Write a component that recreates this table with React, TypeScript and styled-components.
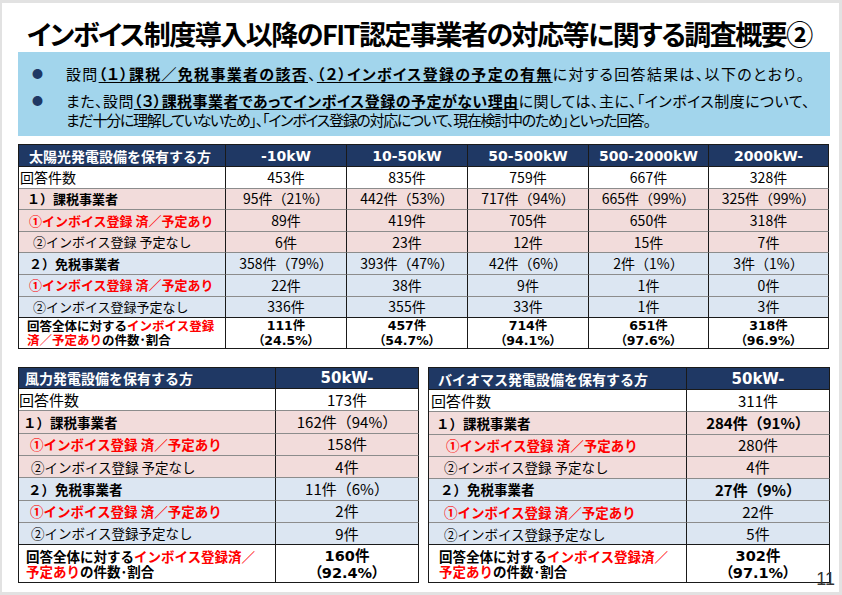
import React from "react";
import styled, { createGlobalStyle } from "styled-components";

const GlobalStyle = createGlobalStyle`
  html, body { margin: 0; padding: 0; background: #fff; }
  body { font-family: "Noto Sans CJK JP", "Noto Sans", sans-serif; color: #000; }
  * { box-sizing: border-box; }
`;

const Page = styled.div`
  position: relative;
  width: 842px;
  height: 595px;
  background: #fff;
  border-top: 3px solid #e2e2e2;
  border-left: 2px solid #e2e2e2;
  border-right: 3px solid #e2e2e2;
  border-bottom: 3px solid #e2e2e2;
  padding: 16px 0 0 16px;
  display: flex;
  flex-direction: column;
  overflow: hidden;
`;

const Title = styled.h1`
  margin: 0 0 0 9px;
  height: 30px;
  font-size: 27px;
  line-height: 30px;
  font-weight: 700;
  letter-spacing: -1.5px;
  font-feature-settings: "palt";
  white-space: nowrap;
  color: #000;
`;

const InfoBox = styled.div`
  width: 812px;
  height: 84px;
  margin-top: 3px;
  background: #a2d5ec;
  padding-top: 12px;
  display: flex;
  flex-direction: column;
  gap: 8px;
`;

const BulletItem = styled.div`
  display: grid;
  grid-template-columns: 48px 1fr;
  font-size: 15px;
  line-height: 19px;
  font-feature-settings: "palt";
  white-space: nowrap;
`;

const Bullet = styled.span`
  color: #1f3864;
  font-size: 11px;
  padding-left: 14px;
`;

const Lines = styled.div`
  display: flex;
  flex-direction: column;
`;

const Line = styled.span<{ $ls: number }>`
  display: block;
  letter-spacing: ${(p) => p.$ls}px;
`;

const Emph = styled.span`
  font-weight: 700;
  text-decoration: underline;
  text-underline-offset: 2px;
`;

const Table = styled.table<{ $w: number }>`
  width: ${(p) => p.$w}px;
  border-collapse: separate;
  border-spacing: 0;
  table-layout: fixed;
  border-top: 1px solid #1a1a1a;
  border-left: 1px solid #1a1a1a;
`;

const MainTable = styled(Table)`
  margin-top: 8px;
`;

const BottomRow = styled.div`
  display: flex;
  gap: 9px;
  margin-top: 18px;
`;

const HeadCell = styled.th<{ $left?: boolean; $pad?: number; $h: number; $size: number }>`
  background: #1f3864;
  color: #fff;
  height: ${(p) => p.$h}px;
  padding: 0 0 0 ${(p) => p.$pad ?? 0}px;
  font-weight: 700;
  font-size: ${(p) => p.$size}px;
  text-align: ${(p) => (p.$left ? "left" : "center")};
  font-family: ${(p) =>
    p.$left
      ? `"Noto Sans CJK JP", sans-serif`
      : `"DejaVu Sans", "Noto Sans CJK JP", sans-serif`};
  border-right: 1px solid #1a1a1a;
  border-bottom: 1px solid #1a1a1a;
  white-space: nowrap;
`;

type Tone = "white" | "pink" | "blue";
const toneBg: Record<Tone, string> = {
  white: "#ffffff",
  pink: "#f2dcdb",
  blue: "#dce6f2",
};

const Row = styled.tr<{ $tone: Tone }>`
  background: ${(p) => toneBg[p.$tone]};
`;

type Kind = "count" | "group" | "yes" | "no" | "total";

const LabelCell = styled.td<{ $pad: number; $kind: Kind; $size: number; $h: number; $dark?: boolean; $lh: number }>`
  height: ${(p) => p.$h}px;
  padding: 0 0 0 ${(p) => p.$pad}px;
  font-size: ${(p) => p.$size}px;
  font-weight: ${(p) => (p.$kind === "count" || p.$kind === "no" ? 400 : 700)};
  color: ${(p) => (p.$kind === "yes" ? "#ff0000" : "#000")};
  line-height: ${(p) => (p.$kind === "total" ? `${p.$lh}px` : "1.2")};
  white-space: nowrap;
  text-align: left;
  border-right: 1px solid #1a1a1a;
  border-bottom: 1px solid ${(p) => (p.$dark ? "#1a1a1a" : "#8c8c8c")};
`;

const ValueCell = styled.td<{ $size: number; $bold?: boolean; $h: number; $dark?: boolean; $lh?: number }>`
  height: ${(p) => p.$h}px;
  padding: 0;
  font-size: ${(p) => p.$size}px;
  font-weight: ${(p) => (p.$bold ? 700 : 400)};
  line-height: ${(p) => (p.$lh ? `${p.$lh}px` : "1.2")};
  text-align: center;
  white-space: nowrap;
  border-right: 1px solid #1a1a1a;
  border-bottom: 1px solid ${(p) => (p.$dark ? "#1a1a1a" : "#8c8c8c")};
`;

const TotalNum = styled.span`
  font-family: "DejaVu Sans", "Noto Sans CJK JP", sans-serif;
  font-feature-settings: "palt";
`;

const Red = styled.span`
  color: #ff0000;
`;

const PageNum = styled.div`
  position: absolute;
  right: 4px;
  bottom: 3px;
  font-family: "Liberation Sans", Arial, sans-serif;
  font-size: 18px;
  line-height: 20px;
  color: #333;
`;

type RowDef = {
  kind: Kind;
  tone: Tone;
  padKey: string;
  label: React.ReactNode;
  values: React.ReactNode[];
  boldValues?: boolean;
};

type Sizes = {
  head: number;
  headSize: number;
  colHeadSize: number;
  row: number;
  total: number;
  label: number;
  count: number;
  value: number;
  totalLabel: number;
  totalValue: number;
  totalLh: number;
  pads: Record<string, number>;
  headPad: number;
};

function DataTable({
  width,
  colWidths,
  title,
  cols,
  rows,
  sizes,
  main,
}: {
  width: number;
  colWidths: number[];
  title: string;
  cols: string[];
  rows: RowDef[];
  sizes: Sizes;
  main?: boolean;
}) {
  const T = main ? MainTable : Table;
  return (
    <T $w={width}>
      <colgroup>
        {colWidths.map((w, i) => (
          <col key={i} style={{ width: w }} />
        ))}
      </colgroup>
      <thead>
        <tr>
          <HeadCell $left $pad={sizes.headPad} $h={sizes.head} $size={sizes.headSize}>
            {title}
          </HeadCell>
          {cols.map((c) => (
            <HeadCell key={c} $h={sizes.head} $size={sizes.colHeadSize}>
              {c}
            </HeadCell>
          ))}
        </tr>
      </thead>
      <tbody>
        {rows.map((r, i) => {
          const isTotal = r.kind === "total";
          const beforeTotal = i === rows.length - 2;
          const h = isTotal ? sizes.total : sizes.row;
          return (
            <Row key={i} $tone={r.tone}>
              <LabelCell
                $pad={sizes.pads[r.padKey]}
                $kind={r.kind}
                $size={isTotal ? sizes.totalLabel : r.kind === "count" ? sizes.count : sizes.label}
                $h={h}
                $lh={sizes.totalLh}
                $dark={beforeTotal || isTotal}
              >
                {r.label}
              </LabelCell>
              {r.values.map((v, j) => (
                <ValueCell
                  key={j}
                  $size={isTotal ? sizes.totalValue : sizes.value}
                  $bold={isTotal || r.boldValues}
                  $h={h}
                  $dark={beforeTotal || isTotal}
                  $lh={isTotal ? sizes.totalLh : undefined}
                >
                  {v}
                </ValueCell>
              ))}
            </Row>
          );
        })}
      </tbody>
    </T>
  );
}

const total = (n: string, p: string) => (
  <TotalNum>
    {n}
    <br />
    {p}
  </TotalNum>
);

const mainRows: RowDef[] = [
  { kind: "count", tone: "white", padKey: "count", label: "回答件数", values: ["453件", "835件", "759件", "667件", "328件"] },
  { kind: "group", tone: "pink", padKey: "g1", label: "１）課税事業者", values: ["95件（21%）", "442件（53%）", "717件（94%）", "665件（99%）", "325件（99%）"] },
  { kind: "yes", tone: "pink", padKey: "yes1", label: "①インボイス登録 済／予定あり", values: ["89件", "419件", "705件", "650件", "318件"] },
  { kind: "no", tone: "pink", padKey: "no1", label: "②インボイス登録 予定なし", values: ["6件", "23件", "12件", "15件", "7件"] },
  { kind: "group", tone: "blue", padKey: "g2", label: "２）免税事業者", values: ["358件（79%）", "393件（47%）", "42件（6%）", "2件（1%）", "3件（1%）"] },
  { kind: "yes", tone: "blue", padKey: "yes2", label: "①インボイス登録 済／予定あり", values: ["22件", "38件", "9件", "1件", "0件"] },
  { kind: "no", tone: "blue", padKey: "no2", label: "②インボイス登録予定なし", values: ["336件", "355件", "33件", "1件", "3件"] },
  {
    kind: "total",
    tone: "white",
    padKey: "total",
    label: (
      <>
        回答全体に対する<Red>インボイス登録</Red>
        <br />
        <Red>済／予定あり</Red>の件数･割合
      </>
    ),
    values: [
      total("111件", "（24.5%）"),
      total("457件", "（54.7%）"),
      total("714件", "（94.1%）"),
      total("651件", "（97.6%）"),
      total("318件", "（96.9%）"),
    ],
  },
];

const smallRows = (v: string[], tot: React.ReactNode, boldGroups: boolean): RowDef[] => [
  { kind: "count", tone: "white", padKey: "count", label: "回答件数", values: [v[0]] },
  { kind: "group", tone: "pink", padKey: "g1", label: "１）課税事業者", values: [v[1]], boldValues: boldGroups },
  { kind: "yes", tone: "pink", padKey: "yes1", label: "①インボイス登録 済／予定あり", values: [v[2]] },
  { kind: "no", tone: "pink", padKey: "no1", label: "②インボイス登録 予定なし", values: [v[3]] },
  { kind: "group", tone: "blue", padKey: "g2", label: "２）免税事業者", values: [v[4]], boldValues: boldGroups },
  { kind: "yes", tone: "blue", padKey: "yes2", label: "①インボイス登録 済／予定あり", values: [v[5]] },
  { kind: "no", tone: "blue", padKey: "no2", label: "②インボイス登録予定なし", values: [v[6]] },
  {
    kind: "total",
    tone: "white",
    padKey: "total",
    label: (
      <>
        回答全体に対する<Red>インボイス登録済／</Red>
        <br />
        <Red>予定あり</Red>の件数･割合
      </>
    ),
    values: [tot],
  },
];

const mainSizes: Sizes = {
  head: 22,
  headSize: 14,
  colHeadSize: 14,
  row: 21.6,
  total: 29,
  label: 13,
  count: 14,
  value: 14,
  totalLabel: 12.5,
  totalValue: 12.5,
  totalLh: 14,
  headPad: 10,
  pads: { count: 1, g1: 8, yes1: 10, no1: 14, g2: 10, yes2: 10, no2: 14, total: 8 },
};

const windSizes: Sizes = {
  head: 21,
  headSize: 14,
  colHeadSize: 15,
  row: 22.2,
  total: 38,
  label: 13.5,
  count: 15,
  value: 15,
  totalLabel: 13.5,
  totalValue: 14.5,
  totalLh: 15,
  headPad: 6,
  pads: { count: 0, g1: 4, yes1: 11, no1: 12, g2: 9, yes2: 11, no2: 12, total: 7 },
};

const bioSizes: Sizes = {
  ...windSizes,
  head: 22,
  headPad: 9,
  pads: { count: 2, g1: 7, yes1: 17, no1: 15, g2: 11, yes2: 15, no2: 15, total: 10 },
};

export default function App() {
  return (
    <>
      <GlobalStyle />
      <Page>
        <Title>インボイス制度導入以降のFIT認定事業者の対応等に関する調査概要②</Title>
        <InfoBox>
          <BulletItem>
            <Bullet>●</Bullet>
            <Lines>
              <Line $ls={1.3}>
                設問<Emph>（１）課税／免税事業者の該否</Emph>、<Emph>（２）インボイス登録の予定の有無</Emph>
                に対する回答結果は、以下のとおり。
              </Line>
            </Lines>
          </BulletItem>
          <BulletItem>
            <Bullet>●</Bullet>
            <Lines>
              <Line $ls={0.45}>
                また、設問<Emph>（３）課税事業者であってインボイス登録の予定がない理由</Emph>
                に関しては、主に、「インボイス制度について、
              </Line>
              <Line $ls={-1.3}>
                まだ十分に理解していないため」、「インボイス登録の対応について、現在検討中のため」といった回答。
              </Line>
            </Lines>
          </BulletItem>
        </InfoBox>

        <DataTable
          main
          width={810}
          colWidths={[207, 121, 121, 121, 120, 120]}
          title="太陽光発電設備を保有する方"
          cols={["-10kW", "10-50kW", "50-500kW", "500-2000kW", "2000kW-"]}
          rows={mainRows}
          sizes={mainSizes}
        />

        <BottomRow>
          <DataTable
            width={400}
            colWidths={[257, 143]}
            title="風力発電設備を保有する方"
            cols={["50kW-"]}
            rows={smallRows(
              ["173件", "162件（94%）", "158件", "4件", "11件（6%）", "2件", "9件"],
              total("160件", "（92.4%）"),
              false
            )}
            sizes={windSizes}
          />
          <DataTable
            width={401}
            colWidths={[258, 143]}
            title="バイオマス発電設備を保有する方"
            cols={["50kW-"]}
            rows={smallRows(
              ["311件", "284件（91%）", "280件", "4件", "27件（9%）", "22件", "5件"],
              total("302件", "（97.1%）"),
              true
            )}
            sizes={bioSizes}
          />
        </BottomRow>
        <PageNum>11</PageNum>
      </Page>
    </>
  );
}
